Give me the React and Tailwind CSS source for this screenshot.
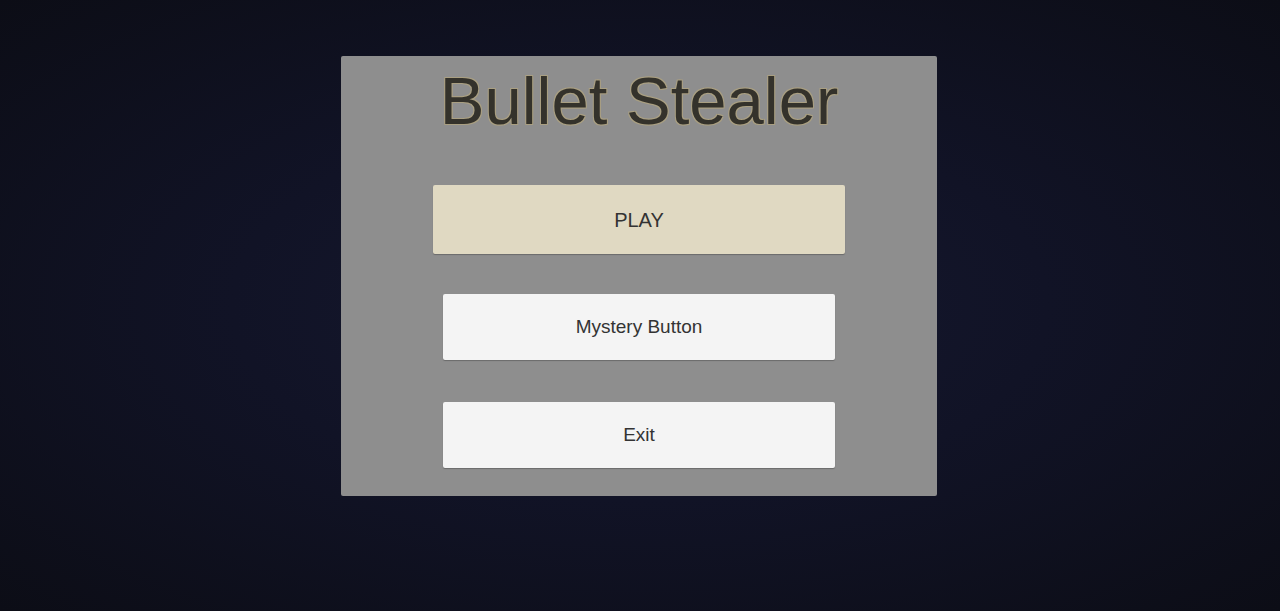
import React from "react";

const MenuButton = ({ label, className }) => (
  <button
    className={`flex items-center justify-center rounded-[2px] text-[#333333] shadow-[0_1px_1px_rgba(0,0,0,0.25)] ${className}`}
  >
    {label}
  </button>
);

export default function App() {
  return (
    <div className="w-full h-[611px] flex justify-center pr-[2px] bg-[radial-gradient(ellipse_at_center,#161930_0%,#111326_45%,#0c0d16_100%)] font-['Liberation_Sans',Arial,sans-serif]">
      <div className="mt-[56px] w-[596px] h-[440px] bg-[#8e8e8e] rounded-[2px] flex flex-col items-center pt-[12px]">
        {/* title */}
        <h1 className="text-[67px] leading-[66px] text-[#34322b] [text-shadow:1px_1px_0_#a99f82,-1px_-1px_0_#a99f82,1px_-1px_0_#a99f82,-1px_1px_0_#a99f82]">
          Bullet Stealer
        </h1>

        <MenuButton
          label="PLAY"
          className="mt-[51px] w-[412px] h-[69px] bg-[#e0d9c2] text-[20px]"
        />
        <MenuButton
          label="Mystery Button"
          className="mt-[40px] w-[392px] h-[66px] bg-[#f4f4f4] text-[19px]"
        />
        <MenuButton
          label="Exit"
          className="mt-[42px] w-[392px] h-[66px] bg-[#f4f4f4] text-[19px]"
        />
      </div>
    </div>
  );
}
